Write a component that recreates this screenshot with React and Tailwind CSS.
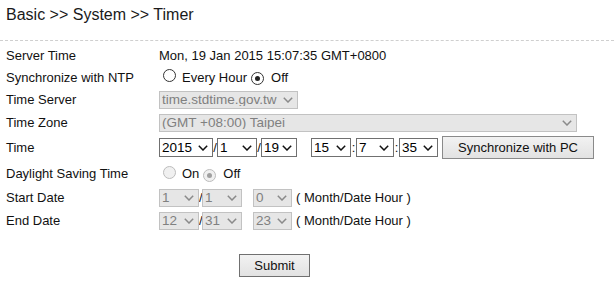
import React from "react";

// Chevron used on every drop-down
const Chevron = ({ disabled }) => (
  <svg
    width="10"
    height="6"
    viewBox="0 0 10 6"
    className="pointer-events-none absolute right-[5px] top-1/2 -translate-y-1/2"
  >
    <path
      d="M0.8 0.8 L5 5 L9.2 0.8"
      fill="none"
      stroke={disabled ? "#8a8a8a" : "#111"}
      strokeWidth="1.5"
    />
  </svg>
);

// Select box (single visible option)
const Select = ({ value, width, disabled, tall }) => (
  <span className={`relative inline-flex shrink-0 ${width} ${tall ? "h-[19px]" : "h-[18px]"}`}>
    <select
      disabled={disabled}
      className={
        disabled
          ? "appearance-none w-full h-full border border-[#c2c2c2] bg-[#e6e6e6] text-[#808080] pl-[2px] text-[13.5px] leading-none"
          : "appearance-none w-full h-full border border-[#707070] bg-white text-black pl-[2px] text-[13.5px] leading-none"
      }
    >
      <option>{value}</option>
    </select>
    <Chevron disabled={disabled} />
  </span>
);

// Radio dot
const Radio = ({ checked, disabled }) => (
  <span
    className={
      disabled
        ? "inline-flex shrink-0 w-[13px] h-[13px] rounded-full border border-[#bcbcbc] bg-[#f0f0f0] items-center justify-center"
        : "inline-flex shrink-0 w-[13px] h-[13px] rounded-full border border-[#333] bg-white items-center justify-center"
    }
  >
    {checked && (
      <span
        className={
          disabled
            ? "w-[5px] h-[5px] rounded-full bg-[#a0a0a0]"
            : "w-[5px] h-[5px] rounded-full bg-[#222]"
        }
      />
    )}
  </span>
);

// One form row
const Row = ({ label, height, children }) => (
  <div className={`flex items-center ${height}`}>
    <div className="w-[159px] pl-[6px] shrink-0 text-[13px] leading-[15px] text-[#111]">
      {label}
    </div>
    <div className="flex items-center text-[13px] leading-[15px] text-[#111]">
      {children}
    </div>
  </div>
);

export default function App() {
  return (
    <div className="w-[614px] h-[283px] bg-white font-['Liberation_Sans',Arial,sans-serif] overflow-hidden">
      {/* Title */}
      <div className="h-[41px] border-b border-dashed border-[#cfcfcf] pt-[3px] pl-[6px] text-[16px] leading-[24px] text-[#1a1a1a]">
        Basic &gt;&gt; System &gt;&gt; Timer
      </div>

      {/* Form */}
      <div className="mt-[3px]">
        <Row label="Server Time" height="h-[22px]">
          Mon, 19 Jan 2015 15:07:35 GMT+0800
        </Row>

        <Row label="Synchronize with NTP" height="h-[22px]">
          <span className="ml-[4px]">
            <Radio />
          </span>
          <span className="ml-[6px]">Every Hour</span>
          <span className="ml-[4px]">
            <Radio checked />
          </span>
          <span className="ml-[7px]">Off</span>
        </Row>

        <Row label="Time Server" height="h-[23px]">
          <Select value="time.stdtime.gov.tw" width="w-[139px]" disabled />
        </Row>

        <Row label="Time Zone" height="h-[23px]">
          <Select value="(GMT +08:00) Taipei" width="w-[418px]" disabled />
        </Row>

        <Row label="Time" height="h-[27px]">
          <Select value="2015" width="w-[54px]" tall />
          <span className="w-[4px] text-center">/</span>
          <Select value="1" width="w-[40px]" tall />
          <span className="w-[4px] text-center">/</span>
          <Select value="19" width="w-[36px]" tall />
          <span className="w-[14px]" />
          <Select value="15" width="w-[40px]" tall />
          <span className="w-[5px] text-center">:</span>
          <Select value="7" width="w-[38px]" tall />
          <span className="w-[5px] text-center">:</span>
          <Select value="35" width="w-[39px]" tall />
          <button className="ml-[4px] w-[152px] h-[23px] border border-[#8a8a8a] bg-gradient-to-b from-[#f2f2f2] to-[#e2e2e2] text-[13px] text-[#111]">
            Synchronize with PC
          </button>
        </Row>

        <Row label="Daylight Saving Time" height="h-[25px]">
          <span className="ml-[4px]">
            <Radio disabled />
          </span>
          <span className="ml-[6px]">On</span>
          <span className="ml-[4px]">
            <Radio checked disabled />
          </span>
          <span className="ml-[7px]">Off</span>
        </Row>

        <Row label="Start Date" height="h-[23px]">
          <Select value="1" width="w-[40px]" disabled />
          <span className="w-[3px] text-center">/</span>
          <Select value="1" width="w-[40px]" disabled />
          <span className="w-[11px]" />
          <Select value="0" width="w-[39px]" disabled />
          <span className="ml-[4px]">( Month/Date Hour )</span>
        </Row>

        <Row label="End Date" height="h-[23px]">
          <Select value="12" width="w-[40px]" disabled />
          <span className="w-[3px] text-center">/</span>
          <Select value="31" width="w-[40px]" disabled />
          <span className="w-[11px]" />
          <Select value="23" width="w-[39px]" disabled />
          <span className="ml-[4px]">( Month/Date Hour )</span>
        </Row>
      </div>

      {/* Submit */}
      <div className="mt-[22px] w-[549px] flex justify-center">
        <button className="w-[71px] h-[23px] border border-[#707070] bg-gradient-to-b from-[#f2f2f2] to-[#e2e2e2] text-[13px] text-[#111]">
          Submit
        </button>
      </div>
    </div>
  );
}
